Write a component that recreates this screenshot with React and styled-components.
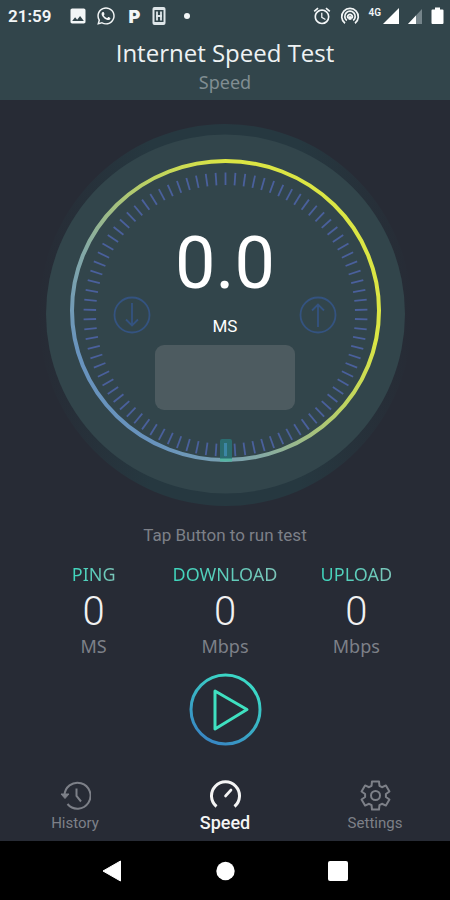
import styled, { createGlobalStyle } from "styled-components";
import { FaWhatsapp } from "react-icons/fa";
import { MdAlarm, MdImage } from "react-icons/md";

const STATS = [
  { label: "PING", value: "0", unit: "MS" },
  { label: "DOWNLOAD", value: "0", unit: "Mbps" },
  { label: "UPLOAD", value: "0", unit: "Mbps" },
];

const TABS = [
  { name: "History", Icon: HistoryIcon },
  { name: "Speed", Icon: SpeedIcon },
  { name: "Settings", Icon: SettingsIcon },
];

const TICKS = Array.from({ length: 90 }, (_, i) => i * 4);

export default function App() {
  return (
    <>
      <GlobalStyle />
      <Screen>
        <Header>
          <StatusBar />
          <Title>Internet Speed Test</Title>
          <SubTitle>Speed</SubTitle>
        </Header>

        <Main>
          <Gauge>
            <Dial />
            <Reading>
              <ReadingValue>0.0</ReadingValue>
              <ReadingRow>
                <DirectionIcon />
                <ReadingUnit>MS</ReadingUnit>
                <DirectionIcon up />
              </ReadingRow>
              <ReadingBox />
            </Reading>
          </Gauge>
          <Hint>Tap Button to run test</Hint>
          <Stats>
            {STATS.map(({ label, value, unit }) => (
              <Stat key={label}>
                <StatLabel>{label}</StatLabel>
                <StatValue>{value}</StatValue>
                <StatUnit>{unit}</StatUnit>
              </Stat>
            ))}
          </Stats>
          <PlayButton type="button" aria-label="Run test">
            <PlayIcon />
          </PlayButton>
        </Main>

        <TabBar>
          {TABS.map(({ name, Icon }) => (
            <Tab key={name} type="button" $active={name === "Speed"}>
              <Icon />
              {name}
            </Tab>
          ))}
        </TabBar>
        <SystemBar>
          <SystemButton type="button" aria-label="Back">
            <svg width="20" height="22" viewBox="0 0 20 22">
              <path d="M1 11 18.5 1V21Z" fill="#fff" stroke="#fff" strokeLinejoin="round" />
            </svg>
          </SystemButton>
          <SystemButton type="button" aria-label="Home">
            <svg width="20" height="20" viewBox="0 0 20 20">
              <circle cx="10.5" cy="10" r="9.2" fill="#fff" />
            </svg>
          </SystemButton>
          <SystemButton type="button" aria-label="Recent apps">
            <svg width="20" height="20" viewBox="0 0 20 20">
              <rect width="20" height="20" rx="2" fill="#fff" />
            </svg>
          </SystemButton>
        </SystemBar>
      </Screen>
    </>
  );
}

function StatusBar() {
  return (
    <Status>
      <StatusGroup>
        <Clock>21:59</Clock>
        <MdImage size={20} />
        <FaWhatsapp size={20} />
        <Letter>P</Letter>
        <svg width="14" height="20" viewBox="0 0 14 20">
          <rect x="0.5" y="1" width="13" height="18" rx="2" fill="#dfe6e9" />
          <rect x="2.5" y="4" width="9" height="12" fill="#32454b" />
          <path d="M5 5.5v9M9 5.5v9M4 10h6" stroke="#dfe6e9" strokeWidth="1.8" />
        </svg>
        <Dot />
      </StatusGroup>
      <StatusGroup>
        <MdAlarm size={20} />
        <HotspotIcon />
        <Signals>
          <Network>4G</Network>
          <svg width="16" height="16" viewBox="0 0 16 16">
            <path d="M0 16 16 0V16Z" fill="#fff" />
          </svg>
        </Signals>
        <svg width="16" height="16" viewBox="0 0 16 16">
          <path d="M1 16 15 1V16Z" fill="#75848a" />
          <path d="M1 16 9 7.5V16Z" fill="#fff" />
        </svg>
        <svg width="14" height="18" viewBox="0 0 14 18">
          <path d="M4 0.5h5v2h2.5q1 0 1 1v12.500q0 1-1 1h-10q-1 0-1-1v-12.500q0-1 1-1H4Z" fill="#fff" />
        </svg>
      </StatusGroup>
    </Status>
  );
}

function HotspotIcon() {
  return (
    <svg width="20" height="20" viewBox="0 0 20 20" fill="none" stroke="#f3f6f7" strokeWidth="1.7">
      <path d="M5 17.300A8.300 8.300 0 1 1 15 17.300" />
      <path d="M6.800 14.500A5.200 5.200 0 1 1 13.200 14.500" />
      <path d="M8.300 12.300A2.300 2.300 0 1 1 11.700 12.300" />
      <circle cx="10" cy="12" r="2" fill="#f3f6f7" stroke="none" />
    </svg>
  );
}

function Dial() {
  return (
    <DialSvg viewBox="0 0 384 384" aria-hidden="true">
      <defs>
        <linearGradient id="ring" x1="0.15" y1="0.8" x2="0.75" y2="0.3">
          <stop offset="0" stopColor="#6893bd" />
          <stop offset="0.3" stopColor="#84a9a6" />
          <stop offset="0.7" stopColor="#bdd262" />
          <stop offset="1" stopColor="#dbe544" />
        </linearGradient>
        <linearGradient id="halo" x1="0" y1="0" x2="1" y2="0">
          <stop offset="0" stopColor="#263840" stopOpacity="0" />
          <stop offset="0.3" stopColor="#263840" />
          <stop offset="0.7" stopColor="#263840" />
          <stop offset="1" stopColor="#263840" stopOpacity="0" />
        </linearGradient>
      </defs>
      <ellipse cx="192.5" cy="191" rx="187" ry="191" fill="url(#halo)" />
      <circle cx="192.5" cy="190" r="179.5" fill="#32454b" />
      <ellipse
        cx="192.5"
        cy="186.5"
        rx="153.5"
        ry="149.5"
        fill="none"
        stroke="url(#ring)"
        strokeWidth="4"
      />
      <rect x="187" y="315" width="12" height="22" rx="2" fill="#2b6c70" />
      <g stroke="#4a609c" strokeWidth="1.8">
        {TICKS.map((angle) => (
          <path key={angle} d="M192.5 48.500v12.500" transform={`rotate(${angle} 192.5 190.5)`} />
        ))}
      </g>
      <path d="M192.5 319v13" stroke="#3c86a5" strokeWidth="3" />
      <path d="M187 336h12" stroke="#55b5a2" strokeWidth="3" />
    </DialSvg>
  );
}

function DirectionIcon({ up }) {
  return (
    <svg width="38" height="38" viewBox="0 0 38 38" fill="none" stroke="#345380" strokeWidth="1.8">
      <circle cx="19" cy="19" r="17.5" />
      <path d={up ? "M19 31V8.5M13 14.5l6-6 6 6" : "M19 7v22.5M13 23.5l6 6 6-6"} />
    </svg>
  );
}

function PlayIcon() {
  return (
    <svg width="74" height="74" viewBox="0 0 74 74" fill="none" strokeWidth="3">
      <defs>
        <linearGradient id="play" x1="0.2" y1="0.9" x2="0.65" y2="0.1">
          <stop offset="0" stopColor="#3889c4" />
          <stop offset="1" stopColor="#3bd6c6" />
        </linearGradient>
      </defs>
      <circle cx="37.5" cy="37.5" r="34.5" stroke="url(#play)" />
      <path d="M27 19 59 37.5 27 57Z" stroke="#3fe0c0" strokeLinejoin="round" />
    </svg>
  );
}

function HistoryIcon() {
  return (
    <svg width="32" height="32" viewBox="0 0 32 32" fill="none" stroke="currentColor" strokeWidth="2">
      <path d="M5.5 17A13 13 0 1 1 8.5 25" />
      <path d="M2 15h8l-4 4.5Z" fill="currentColor" strokeWidth="1" />
      <path d="M17.5 9.5V17l4.5 5.5" />
    </svg>
  );
}

function SpeedIcon() {
  return (
    <svg width="32" height="32" viewBox="0 0 32 32" fill="none" stroke="currentColor" strokeWidth="3">
      <path d="M7.5 27.5A14 14 0 1 1 25.5 27.5" />
      <path d="M16.5 17 22 11" strokeWidth="2.6" strokeLinecap="round" />
    </svg>
  );
}

function SettingsIcon() {
  // six teeth, each one an outer flat edge between two inner points
  const teeth = [0, 60, 120, 180, 240, 300].flatMap((angle) =>
    [
      [-22, 10.5],
      [-14, 14.5],
      [14, 14.5],
      [22, 10.5],
    ].map(([turn, radius]) => {
      const rad = ((angle + turn) * Math.PI) / 180;
      return `${16.5 + radius * Math.sin(rad)},${16.5 - radius * Math.cos(rad)}`;
    })
  );

  return (
    <svg width="32" height="32" viewBox="0 0 32 32" fill="none" stroke="currentColor" strokeWidth="2">
      <polygon points={teeth.join(" ")} strokeLinejoin="round" />
      <circle cx="16.5" cy="16.5" r="4.5" />
    </svg>
  );
}

const GlobalStyle = createGlobalStyle`
  * {
    box-sizing: border-box;
  }

  body {
    margin: 0;
    background-color: #272b35;
    font-family: "Noto Sans", "Open Sans", sans-serif;
  }

  h1,
  p {
    margin: 0;
  }

  button {
    padding: 0;
    border: 0;
    background: none;
    cursor: pointer;
  }

  svg {
    display: block;
    flex-shrink: 0;
  }
`;

const Screen = styled.div`
  display: flex;
  flex-direction: column;
  min-height: 100vh;
`;

const Header = styled.header`
  display: flex;
  flex-direction: column;
  align-items: center;

  padding-bottom: 10px;
  background-color: #32454b;
`;

const Status = styled.div`
  display: flex;
  justify-content: space-between;
  align-items: center;

  width: 100%;
  height: 32px;
  padding: 0 5px 0 8px;
  color: #f3f6f7;
`;

const StatusGroup = styled.div`
  display: flex;
  align-items: center;
  gap: 8px;
`;

const Clock = styled.span`
  margin-right: 9px;
  font: 600 17px Roboto, sans-serif;
`;

const Letter = styled.span`
  width: 20px;
  font: 900 18px Inter, sans-serif;
  text-align: center;
`;

const Dot = styled.span`
  width: 6px;
  height: 6px;
  margin-left: 10px;
  border-radius: 50%;
  background-color: #f3f6f7;
`;

const Signals = styled.div`
  display: flex;
  gap: 2px;
`;

const Network = styled.span`
  font: 600 10px/10px Roboto, sans-serif;
`;

const Title = styled.h1`
  font-family: "Open Sans", sans-serif;
  font-size: 24px;
  font-weight: 400;
  line-height: 42px;
  color: #eef2f3;
`;

const SubTitle = styled.p`
  font-size: 18px;
  line-height: 16px;
  color: #808d92;
`;

const Main = styled.main`
  display: flex;
  flex: 1;
  flex-direction: column;
  align-items: center;

  padding-top: 24px;
`;

const Gauge = styled.section`
  display: grid;
  justify-items: center;

  width: 100%;
  max-width: 384px;
`;

const DialSvg = styled.svg`
  grid-area: 1 / 1;
  width: 100%;
`;

const Reading = styled.div`
  display: flex;
  flex-direction: column;
  align-items: center;
  grid-area: 1 / 1;

  width: 224px;
  padding-top: 108px;
`;

const ReadingValue = styled.p`
  font: 400 72px/64px Roboto, sans-serif;
  color: #fff;
`;

const ReadingRow = styled.div`
  display: flex;
  justify-content: space-between;
  align-items: flex-end;

  width: 100%;
`;

const ReadingUnit = styled.span`
  font: 400 17px/16px Roboto, sans-serif;
  color: #fff;
`;

const ReadingBox = styled.div`
  width: 140px;
  height: 65px;
  margin-top: 11px;
  border-radius: 9px;
  background-color: #4d5b60;
`;

const Hint = styled.p`
  margin-top: 16px;
  font: 400 17px/22px Roboto, sans-serif;
  color: #7d8088;
`;

const Stats = styled.section`
  display: grid;
  grid-template-columns: repeat(3, 1fr);

  width: 100%;
  padding: 0 28px;
  margin-top: 16px;
`;

const Stat = styled.div`
  display: flex;
  flex-direction: column;
  align-items: center;
`;

const StatLabel = styled.p`
  font-size: 18px;
  line-height: 24px;
  color: transparent;
  background: linear-gradient(90deg, #3ed6bd, #7cc5b9);
  background-clip: text;
`;

const StatValue = styled.p`
  margin-top: 4px;
  font: 300 40px/44px Roboto, sans-serif;
  color: #f1f1f1;
`;

const StatUnit = styled.p`
  font-size: 18px;
  line-height: 24px;
  color: #7d8088;
`;

const PlayButton = styled.button`
  margin-top: 14px;
  border-radius: 50%;
`;

const TabBar = styled.nav`
  display: grid;
  grid-template-columns: repeat(3, 1fr);

  padding-bottom: 8px;
`;

const Tab = styled.button`
  display: flex;
  flex-direction: column;
  align-items: center;
  gap: 2px;

  font: ${({ $active }) => ($active ? "500 18px" : "400 15px")} / 20px Roboto, sans-serif;
  color: ${({ $active }) => ($active ? "#f4f4f4" : "#7d8088")};
`;

const SystemBar = styled.footer`
  display: flex;
  justify-content: center;
  align-items: center;
  gap: 93px;

  height: 59px;
  background-color: #000;
`;

const SystemButton = styled.button`
  display: flex;
  justify-content: center;
  align-items: center;

  width: 20px;
  height: 24px;
`;
